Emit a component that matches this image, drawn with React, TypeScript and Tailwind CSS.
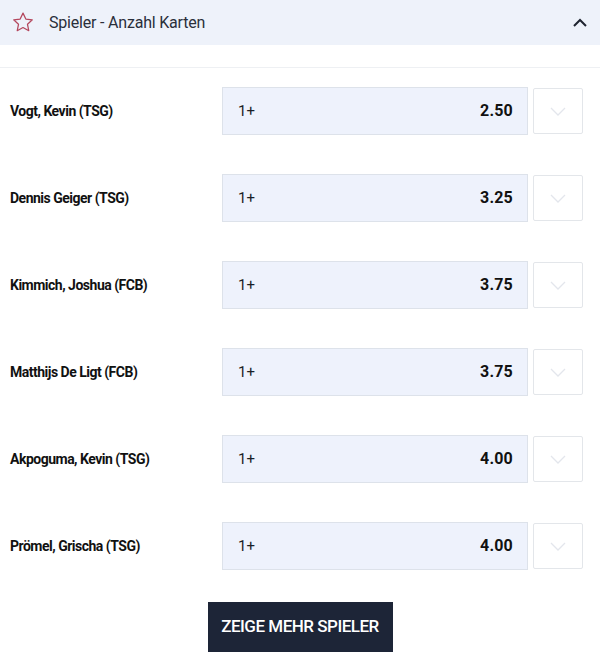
import React from "react";

const rows = [
  { name: "Vogt, Kevin (TSG)", odd: "2.50" },
  { name: "Dennis Geiger (TSG)", odd: "3.25" },
  { name: "Kimmich, Joshua (FCB)", odd: "3.75" },
  { name: "Matthijs De Ligt (FCB)", odd: "3.75" },
  { name: "Akpoguma, Kevin (TSG)", odd: "4.00" },
  { name: "Prömel, Grischa (TSG)", odd: "4.00" },
];

export default function App() {
  return (
    <div className="w-[600px] h-[660px] bg-white overflow-hidden" style={{ fontFamily: "Roboto, 'Noto Sans', sans-serif" }}>
      <div className="h-[45px] bg-[#eef2fa] flex items-center pl-[11px] pr-[12px]">
        <svg width="24" height="23" viewBox="0 0 24 24" fill="none" stroke="#b4475d" strokeWidth="1.3" strokeLinejoin="round">
          <path d="M12 2.2l2.95 6.2 6.75.8-5 4.65 1.3 6.7L12 17.25 6 20.55l1.3-6.7-5-4.65 6.75-.8z" />
        </svg>
        <span className="ml-[14px] text-[16px] text-[#2a2f3a] tracking-[-0.2px]">Spieler - Anzahl Karten</span>
        <svg className="ml-auto mr-[1px]" width="14" height="9" viewBox="0 0 14 9" fill="none" stroke="#1f2430" strokeWidth="2">
          <path d="M1 8l6-6 6 6" />
        </svg>
      </div>
      <div className="h-[22px]" />
      <div className="border-t border-[#eef0f3]" />
      <div className="pt-[19px] flex flex-col gap-[39px]">
        {rows.map((r) => (
          <div key={r.name} className="flex items-center h-[48px]">
            <div className="pl-[10px] w-[222px] text-[14px] font-bold text-[#111] tracking-[-0.5px]">{r.name}</div>
            <div className="w-[306px] h-[48px] bg-[#eef2fc] border border-[#dde2ea] flex items-center justify-between pl-[15px] pr-[14px]">
              <span className="text-[15px] text-[#1b1f27]">1+</span>
              <span className="text-[16px] font-bold text-[#111] tracking-[0.2px]">{r.odd}</span>
            </div>
            <div className="ml-[5px] w-[50px] h-[46px] border border-[#e3e6ea] rounded-[2px] flex items-center justify-center">
              <svg width="16" height="9" viewBox="0 0 16 9" fill="none" stroke="#e3e6ec" strokeWidth="1.3">
                <path d="M1 1l7 7 7-7" />
              </svg>
            </div>
          </div>
        ))}
      </div>
      <div className="flex justify-center mt-[32px]">
        <div className="w-[185px] h-[50px] bg-[#1d2537] flex items-center justify-center text-white text-[17px] font-medium tracking-[-0.5px]">
          ZEIGE MEHR SPIELER
        </div>
      </div>
    </div>
  );
}
